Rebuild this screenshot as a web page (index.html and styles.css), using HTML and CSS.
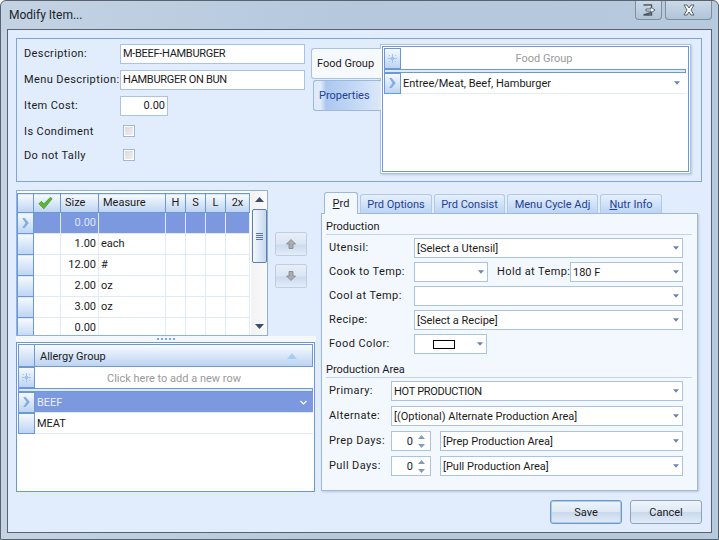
FILE: index.html
```html
<!DOCTYPE html>
<html lang="en">
<head>
    <meta charset="UTF-8" />
    <title>Modify Item...</title>
    <link rel="stylesheet" href="styles.css">
</head>
<body>
<svg class="defs" width="0" height="0">
    <symbol id="arrow" viewBox="0 0 7 4"><path d="M0 0h7L3.500 4z" /></symbol>
    <symbol id="chevron" viewBox="0 0 8 12"><path d="M0 0h3l5 6-5 6H0l4-6z" /></symbol>
    <symbol id="flake" viewBox="0 0 9 9"><path d="M4 0h1v9H4zM0 4h9v1H0zM1 1h1v1H1zM7 1h1v1H7zM1 7h1v1H1zM7 7h1v1H7zM3 3h3v3H3z" /></symbol>
</svg>
<div class="window">
    <header class="titlebar">
        <span class="title">Modify Item...</span>
        <div class="caption-btns">
            <div class="caption-btn caption-small">
                <svg width="14" height="12" viewBox="0 0 14 12"><path d="M1.500 1h8v2.500M9.500 8.500V11h-8z" fill="#e8eef5" stroke="#4a5568" stroke-width="1.400"/><path d="M4 5h5V3l4 3-4 3V7H4z" fill="#fff" stroke="#4a5568" stroke-width=".9"/></svg>
            </div>
            <div class="caption-btn caption-close">
                <svg width="14" height="12" viewBox="0 0 14 12"><path d="M2 1h3l2 3 2-3h3L9 6l3 5H9L7 8l-2 3H2l3-5z" fill="#fff" stroke="#56606e"/></svg>
            </div>
        </div>
    </header>

    <main class="content">
        <section class="top-group">
            <div class="item-form">
                <div class="form-row"><label class="item-label">Description:</label><div class="input input-wide caps">M-BEEF-HAMBURGER</div></div>
                <div class="form-row"><label class="item-label">Menu Description:</label><div class="input input-wide caps">HAMBURGER ON BUN</div></div>
                <div class="form-row"><label class="item-label">Item Cost:</label><div class="input input-cost">0.00</div></div>
                <div class="form-row check-row"><label class="item-label">Is Condiment</label><span class="checkbox"></span></div>
                <div class="form-row check-row"><label class="item-label">Do not Tally</label><span class="checkbox"></span></div>
            </div>
            <div class="side-tabs">
                <div class="side-tab side-active">Food Group</div>
                <div class="side-tab side-idle">Properties</div>
            </div>
            <div class="food-panel">
                <div class="food-inner">
                    <div class="food-head">
                        <span class="row-head"><svg class="flake"><use href="#flake"/></svg></span>
                        <span class="food-title">Food Group</span>
                    </div>
                    <div class="food-sep"></div>
                    <div class="food-row">
                        <span class="row-head"><svg class="chevron"><use href="#chevron"/></svg></span>
                        <span class="food-value">Entree/Meat, Beef, Hamburger</span>
                        <svg class="arrow"><use href="#arrow"/></svg>
                    </div>
                </div>
            </div>
        </section>

        <section class="middle">
            <div class="left-col">
                <div class="grid-row">
                    <div class="size-grid">
                        <table class="sizes">
                            <thead>
                                <tr>
                                    <th class="c-head"></th>
                                    <th class="c-check"><svg class="check" width="15" height="14" viewBox="0 0 18 16"><path d="M1 9l3-3 3 3 8-8 2 2L7 15z" fill="#5cb531" stroke="#3d8f22" stroke-width=".8"/></svg></th>
                                    <th class="c-size">Size</th>
                                    <th class="c-measure">Measure</th>
                                    <th class="c-flag">H</th>
                                    <th class="c-flag">S</th>
                                    <th class="c-flag">L</th>
                                    <th class="c-last">2x</th>
                                </tr>
                            </thead>
                            <tbody>
                                <tr class="selected"><td class="row-cell"><svg class="chevron"><use href="#chevron"/></svg></td><td></td><td class="num">0.00</td><td></td><td></td><td></td><td></td><td></td></tr>
                                <tr><td class="row-cell"></td><td></td><td class="num">1.00</td><td>each</td><td></td><td></td><td></td><td></td></tr>
                                <tr><td class="row-cell"></td><td></td><td class="num">12.00</td><td>#</td><td></td><td></td><td></td><td></td></tr>
                                <tr><td class="row-cell"></td><td></td><td class="num">2.00</td><td>oz</td><td></td><td></td><td></td><td></td></tr>
                                <tr><td class="row-cell"></td><td></td><td class="num">3.00</td><td>oz</td><td></td><td></td><td></td><td></td></tr>
                                <tr><td class="row-cell"></td><td></td><td class="num">0.00</td><td></td><td></td><td></td><td></td><td></td></tr>
                            </tbody>
                        </table>
                        <div class="scrollbar">
                            <svg class="scroll-arrow" width="9" height="5" viewBox="0 0 9 5"><path d="M0 5L4.500 0 9 5z"/></svg>
                            <div class="scroll-thumb"><span></span><span></span><span></span><span></span></div>
                            <svg class="scroll-arrow scroll-down" width="9" height="5" viewBox="0 0 9 5"><path d="M0 0l4.500 5L9 0z"/></svg>
                        </div>
                    </div>
                    <div class="move-btns">
                        <div class="move-btn"><svg width="10" height="10" viewBox="0 0 10 10"><path d="M5 .5L9.500 5H7v4.500H3V5H.5z" fill="#a9adb2" stroke="#7d8389" stroke-width=".8"/></svg></div>
                        <div class="move-btn"><svg width="10" height="10" viewBox="0 0 10 10"><path d="M5 9.500L9.500 5H7V.5H3V5H.5z" fill="#a9adb2" stroke="#7d8389" stroke-width=".8"/></svg></div>
                    </div>
                </div>
                <div class="splitter"><span></span><span></span><span></span><span></span><span></span></div>
                <div class="allergy">
                    <div class="allergy-head">
                        <span class="row-head"></span>
                        <span class="allergy-title">Allergy Group</span>
                        <svg class="sort-up" width="10" height="6" viewBox="0 0 10 6"><path d="M0 6l5-6 5 6z"/></svg>
                    </div>
                    <div class="allergy-new">
                        <span class="row-head"><svg class="flake"><use href="#flake"/></svg></span>
                        <span class="new-row-text">Click here to add a new row</span>
                    </div>
                    <div class="allergy-sep"></div>
                    <div class="allergy-row allergy-selected">
                        <span class="row-head"><svg class="chevron"><use href="#chevron"/></svg></span>
                        <span class="allergy-name">BEEF</span>
                        <svg class="sel-arrow" width="7" height="5" viewBox="0 0 7 5"><path d="M.5 1l3 3 3-3" fill="none" stroke="#fff" stroke-width="1.200"/></svg>
                    </div>
                    <div class="allergy-row">
                        <span class="row-head"></span>
                        <span class="allergy-name">MEAT</span>
                    </div>
                </div>
            </div>

            <div class="right-col">
                <nav class="tabs">
                    <div class="tab tab-active"><u>P</u>rd</div>
                    <div class="tab tab-options">Prd Options</div>
                    <div class="tab tab-consist">Prd Consist</div>
                    <div class="tab tab-cycle">Menu Cycle Adj</div>
                    <div class="tab tab-nutr"><u>N</u>utr Info</div>
                </nav>
                <div class="tab-panel">
                    <h3 class="section-title">Production</h3>
                    <div class="prd-row">
                        <label class="prd-label">Utensil:</label>
                        <div class="combo combo-fill"><span>[Select a Utensil]</span><svg class="arrow"><use href="#arrow"/></svg></div>
                    </div>
                    <div class="prd-row">
                        <label class="prd-label">Cook to Temp:</label>
                        <div class="combo combo-cook"><span></span><svg class="arrow"><use href="#arrow"/></svg></div>
                        <label class="hold-label">Hold at Temp:</label>
                        <div class="combo combo-fill"><span>180 F</span><svg class="arrow"><use href="#arrow"/></svg></div>
                    </div>
                    <div class="prd-row">
                        <label class="prd-label">Cool at Temp:</label>
                        <div class="combo combo-fill"><span></span><svg class="arrow"><use href="#arrow"/></svg></div>
                    </div>
                    <div class="prd-row">
                        <label class="prd-label">Recipe:</label>
                        <div class="combo combo-fill"><span>[Select a Recipe]</span><svg class="arrow"><use href="#arrow"/></svg></div>
                    </div>
                    <div class="prd-row">
                        <label class="prd-label">Food Color:</label>
                        <div class="combo combo-color"><span class="swatch"></span><svg class="arrow"><use href="#arrow"/></svg></div>
                    </div>

                    <h3 class="section-title section-area">Production Area</h3>
                    <div class="area-row">
                        <label class="area-label">Primary:</label>
                        <div class="combo combo-fill"><span class="caps">HOT PRODUCTION</span><svg class="arrow"><use href="#arrow"/></svg></div>
                    </div>
                    <div class="area-row">
                        <label class="area-label">Alternate:</label>
                        <div class="combo combo-fill"><span>[(Optional) Alternate Production Area]</span><svg class="arrow"><use href="#arrow"/></svg></div>
                    </div>
                    <div class="area-row">
                        <label class="area-label">Prep Days:</label>
                        <div class="spin"><span>0</span><span class="spin-arrows"><svg width="7" height="4" viewBox="0 0 7 4"><path d="M0 4l3.500-4L7 4z"/></svg><svg width="7" height="4" viewBox="0 0 7 4"><path d="M0 0l3.500 4L7 0z"/></svg></span></div>
                        <div class="combo combo-fill"><span>[Prep Production Area]</span><svg class="arrow"><use href="#arrow"/></svg></div>
                    </div>
                    <div class="area-row">
                        <label class="area-label">Pull Days:</label>
                        <div class="spin"><span>0</span><span class="spin-arrows"><svg width="7" height="4" viewBox="0 0 7 4"><path d="M0 4l3.500-4L7 4z"/></svg><svg width="7" height="4" viewBox="0 0 7 4"><path d="M0 0l3.500 4L7 0z"/></svg></span></div>
                        <div class="combo combo-fill"><span>[Pull Production Area]</span><svg class="arrow"><use href="#arrow"/></svg></div>
                    </div>
                </div>
            </div>
        </section>

        <footer class="actions">
            <button class="btn btn-default">Save</button>
            <button class="btn">Cancel</button>
        </footer>
    </main>
</div>
</body>
</html>
```
FILE: styles.css
```css
* {
    box-sizing: border-box;
    margin: 0;
    padding: 0;
}

body {
    width: 719px;
    height: 540px;
    overflow: hidden;
    font-family: Roboto, "Liberation Sans", Arial, sans-serif;
    font-size: 11px;
    white-space: nowrap;
    color: #1b1b1b;
    background: #fff;
}

.defs {
    position: absolute;
}

label {
    letter-spacing: .4px;
    padding-bottom: 2px;
}

.caps {
    letter-spacing: -.3px;
}

/* Window frame */
.window {
    width: 719px;
    height: 540px;
    padding: 0 7px 7px;
    display: flex;
    flex-direction: column;
    border: 1px solid #59626d;
    border-radius: 6px 6px 0 0;
    background: linear-gradient(90deg, #c3d3e4 0%, #b5c8dc 50%, #b7cadd 100%);
}

.titlebar {
    height: 28px;
    margin: 0 0 0 -1px;
    display: flex;
    justify-content: space-between;
    flex-shrink: 0;
}

.title {
    margin-top: 7px;
    padding-left: 2px;
    font-size: 12px;
    color: #20242a;
}

.caption-btns {
    display: flex;
    gap: 3px;
    margin-right: -1px;
}

.caption-btn {
    height: 19px;
    display: flex;
    align-items: center;
    justify-content: center;
    border: 1px solid #7f8d9c;
    border-top: none;
    border-radius: 0 0 4px 4px;
    background: linear-gradient(#cbd9e7, #b0c4d9);
}

.caption-small {
    width: 27px;
}

.caption-close {
    width: 47px;
}

.content {
    flex: 1;
    display: flex;
    flex-direction: column;
    padding: 8px 9px 0 8px;
    margin-left: -1px;
    margin-right: -1px;
    margin-bottom: -1px;
    border: 1px solid #59626d;
    background: #e1edfd;
}

/* Top group */
.top-group {
    height: 144px;
    display: flex;
    align-items: flex-start;
    padding: 5px 0 0 7px;
    border: 1px solid #7ea6dd;
}

.item-form {
    width: 287px;
    flex-shrink: 0;
}

.form-row {
    height: 20px;
    margin-bottom: 6px;
    display: flex;
    align-items: center;
}

.check-row {
    height: 18px;
}

.check-row label {
    padding-bottom: 0;
}

.item-label {
    width: 96px;
    flex-shrink: 0;
}

.input {
    height: 20px;
    padding: 0 2px;
    line-height: 18px;
    border: 1px solid #a9c3e4;
    background: #fff;
}

.input-wide {
    width: 185px;
}

.input-cost {
    width: 48px;
    padding-right: 2px;
    text-align: right;
}

.checkbox {
    width: 12px;
    height: 12px;
    margin-left: 3px;
    border: 1px solid #9fb8d8;
    background: linear-gradient(135deg, #d8d8d8, #f1f1f1);
    box-shadow: inset 0 0 0 1px #fff;
}

.side-tabs {
    width: 70px;
    flex-shrink: 0;
    margin-top: 4px;
    position: relative;
    z-index: 1;
    margin-right: -1px;
}

.side-tab {
    display: flex;
    align-items: center;
    padding: 0 0 1px 5px;
}

.side-active {
    height: 31px;
    margin-bottom: 1px;
    background: #f6faff;
    border: 1px solid #a9c3e4;
    border-right: none;
    border-radius: 3px 0 0 3px;
}

.side-idle {
    height: 31px;
    margin-left: 2px;
    color: #1e3f9a;
    background: linear-gradient(90deg, #dfebfb 0%, #dfebfb 10%, #acc7ef 18%, #dbe8fa 100%);
    border: 1px solid #9db8dc;
    border-right: none;
    border-radius: 3px 0 0 3px;
}

.food-panel {
    width: 311px;
    height: 130px;
    padding: 1px;
    border: 1px solid #a9c3e4;
    background: #fff;
    box-shadow: 1px 1px 2px #b8c8dc;
}

.food-inner {
    height: 100%;
    padding: 1px;
    border: 1px solid #6c98d4;
    background: #fff;
}

.row-head {
    width: 17px;
    flex-shrink: 0;
    display: flex;
    align-items: center;
    justify-content: center;
    border: 1px solid #6c98d4;
    background: linear-gradient(#f5f9ff, #bdd4f3);
}

.flake {
    width: 9px;
    height: 9px;
    fill: #a3c3ef;
}

.chevron {
    width: 7px;
    height: 10px;
    fill: #82ade6;
}

.arrow {
    width: 6px;
    height: 4px;
    flex-shrink: 0;
    fill: #6784b5;
}

.food-head {
    height: 21px;
    display: flex;
}

.food-title {
    flex: 1;
    text-align: center;
    line-height: 22px;
    color: #9a9a9a;
}

.food-sep {
    height: 4px;
    margin: 0 1px 0 0;
    border: 1px solid #6c98d4;
    background: #dce9fb;
}

.food-row {
    height: 21px;
    display: flex;
    align-items: center;
    padding-right: 7px;
    border-bottom: 1px solid #e3edf9;
}

.food-row .row-head {
    height: 21px;
}

.food-value {
    flex: 1;
    padding-left: 2px;
}

/* Middle part */
.middle {
    display: flex;
    margin-top: 8px;
    height: 302px;
}

.left-col {
    width: 300px;
    flex-shrink: 0;
}

.grid-row {
    display: flex;
    height: 146px;
}

.size-grid {
    width: 252px;
    height: 146px;
    overflow: hidden;
    display: flex;
    padding-top: 2px;
    border: 1px solid #8fb0dc;
    background: #fff;
}

.sizes {
    width: 232px;
    table-layout: fixed;
    border-collapse: collapse;
    align-self: flex-start;
}

.sizes th {
    height: 19px;
    font-weight: normal;
    text-align: left;
    padding: 0 0 1px 4px;
    line-height: 14px;
    border: 1px solid #6c98d4;
    background: linear-gradient(#f7fbff, #bcd3f2);
}

.sizes td {
    height: 21px;
    padding: 0 2px 1px;
    line-height: 14px;
    border: 1px solid #dfeafa;
    border-top: none;
}

.c-head { width: 16px; }
.c-check { width: 27px; }
.c-size { width: 38px; }
.c-measure { width: 67px; }
.c-flag { width: 20px; }
.c-last { width: 24px; }

.check {
    display: block;
}

.sizes th.c-flag,
.sizes th.c-last {
    text-align: center;
    padding: 0 0 1px;
}

.sizes .row-cell {
    padding: 0;
    text-align: center;
    border: 1px solid #6c98d4;
    border-top: none;
    background: linear-gradient(#f5f9ff, #bdd4f3);
}

.row-cell .chevron {
    display: block;
    margin: 0 auto;
}

.sizes .num {
    text-align: right;
}

.selected td {
    background: #7c98de;
    color: #dfe7f8;
}

.scrollbar {
    width: 18px;
    margin-top: -2px;
    margin-left: 1px;
    display: flex;
    flex-direction: column;
    align-items: center;
    padding-top: 6px;
    background: linear-gradient(90deg, #f2f2f2, #fafafa);
}

.scroll-arrow {
    fill: #3c4d66;
    flex-shrink: 0;
}

.scroll-thumb {
    width: 15px;
    height: 54px;
    margin-top: 7px;
    display: flex;
    flex-direction: column;
    align-items: center;
    justify-content: center;
    gap: 1px;
    border: 1px solid #5f7ea8;
    border-radius: 2px;
    background: linear-gradient(90deg, #f3f8ff, #c7d9ef);
}

.scroll-thumb span {
    width: 7px;
    height: 1px;
    background: #5f7497;
}

.scroll-down {
    margin-top: 61px;
}

.move-btns {
    margin: 42px 0 0 7px;
    display: flex;
    flex-direction: column;
    gap: 8px;
}

.move-btn {
    width: 32px;
    height: 24px;
    display: flex;
    align-items: center;
    justify-content: center;
    border: 1px solid #c0cedf;
    border-radius: 2px;
    background: linear-gradient(#e6eff9 0%, #dbe6f3 50%, #cbdaed 55%, #e3edf9 100%);
}

.splitter {
    height: 6px;
    display: flex;
    justify-content: center;
    gap: 2px;
    padding: 2px 0 0;
    background: #f3f8ff;
}

.splitter span {
    width: 2px;
    height: 2px;
    background: #7ea6dd;
}

.allergy {
    width: 299px;
    height: 150px;
    padding: 1px;
    border: 1px solid #6c98d4;
    background: #fff;
}

.allergy-head {
    height: 23px;
    display: flex;
    align-items: center;
    border: 1px solid #6c98d4;
    background: linear-gradient(#f7fbff, #bcd3f2);
}

.allergy-head .row-head {
    width: 16px;
    height: 21px;
    border-width: 0 1px 0 0;
}

.allergy-title {
    flex: 1;
    padding: 2px 0 0 5px;
}

.sort-up {
    fill: #a8cdf5;
    margin-right: 15px;
}

.allergy-new {
    height: 21px;
    display: flex;
}

.new-row-text {
    flex: 1;
    text-align: center;
    line-height: 23px;
    color: #999;
}

.allergy-sep {
    height: 4px;
    border: 1px solid #6c98d4;
    background: #dce9fb;
}

.allergy-row {
    height: 21px;
    display: flex;
    align-items: center;
    border-bottom: 1px solid #e0eaf8;
}

.allergy-row .row-head {
    height: 21px;
}

.allergy-name {
    flex: 1;
    padding-left: 2px;
}

.allergy-selected {
    background: #7c98de;
    color: #e8eefb;
}

.sel-arrow {
    margin-right: 6px;
}

/* Right side */
.right-col {
    margin-left: 5px;
    width: 377px;
    padding-top: 2px;
}

.tabs {
    height: 21px;
    display: flex;
    gap: 2px;
    position: relative;
    padding-left: 3px;
    z-index: 1;
}

.tab {
    height: 19px;
    margin-top: 2px;
    padding-top: 3px;
    text-align: center;
    color: #1e3f9a;
    border: 1px solid #b3c9e6;
    border-bottom: none;
    border-radius: 3px 3px 0 0;
    background: linear-gradient(#e6f0fc, #bcd4f4);
}

.tab-active {
    width: 34px;
    height: 22px;
    margin-top: 0;
    padding-top: 4px;
    color: #1b1b1b;
    background: #f3f8ff;
    border-color: #9fb8d8;
}

.tab-options { width: 72px; }
.tab-consist { width: 71px; }
.tab-cycle { width: 91px; }
.tab-nutr { width: 62px; }

.tab-panel {
    height: 278px;
    padding: 5px 14px 0 4px;
    border: 1px solid #9fb8d8;
    background: #f3f8ff;
    box-shadow: 1px 1px 2px #b8c8dc;
}

.section-title {
    height: 16px;
    font-weight: normal;
    font-size: 11px;
    line-height: 16px;
    border-bottom: 1px solid #c4d5eb;
    margin-right: -9px;
    margin-bottom: 3px;
}

.section-area {
    margin-top: 8px;
}

.prd-row {
    height: 20px;
    margin-bottom: 4px;
    display: flex;
    align-items: center;
}

.prd-label {
    width: 88px;
    padding-left: 3px;
    flex-shrink: 0;
}

.hold-label {
    margin-left: 9px;
    width: 73px;
    flex-shrink: 0;
}

.area-row {
    height: 20px;
    margin-bottom: 5px;
    display: flex;
    align-items: center;
}

.area-label {
    width: 65px;
    padding-left: 3px;
    flex-shrink: 0;
}

.combo {
    height: 20px;
    display: flex;
    align-items: center;
    justify-content: space-between;
    padding: 0 3px 0 2px;
    border: 1px solid #a9c3e4;
    background: #fff;
}

.combo-fill {
    flex: 1;
    min-width: 0;
}

.combo-cook {
    width: 74px;
    flex-shrink: 0;
}

.combo-color {
    width: 73px;
    flex-shrink: 0;
    padding-left: 18px;
}

.swatch {
    width: 22px;
    height: 9px;
    border: 1px solid #000;
    background: #fff;
}

.spin {
    width: 40px;
    height: 20px;
    margin-right: 9px;
    flex-shrink: 0;
    display: flex;
    align-items: center;
    justify-content: flex-end;
    gap: 5px;
    padding-right: 5px;
    border: 1px solid #a9c3e4;
    background: #fff;
}

.spin-arrows {
    display: flex;
    flex-direction: column;
    gap: 5px;
    fill: #7f9ac6;
}

.spin-arrows svg {
    display: block;
}

/* Buttons */
.actions {
    margin-top: 8px;
    display: flex;
    justify-content: flex-end;
    gap: 8px;
}

.btn {
    width: 72px;
    height: 24px;
    font: inherit;
    color: #1b1b1b;
    border: 1px solid #8fa3bb;
    border-radius: 3px;
    background: linear-gradient(#eef4fb 0%, #dfe9f5 48%, #c9d9ec 52%, #e0ebf8 100%);
}

.btn-default {
    border-color: #6f97c8;
    box-shadow: inset 0 0 0 1px #a8cbee;
}
```
